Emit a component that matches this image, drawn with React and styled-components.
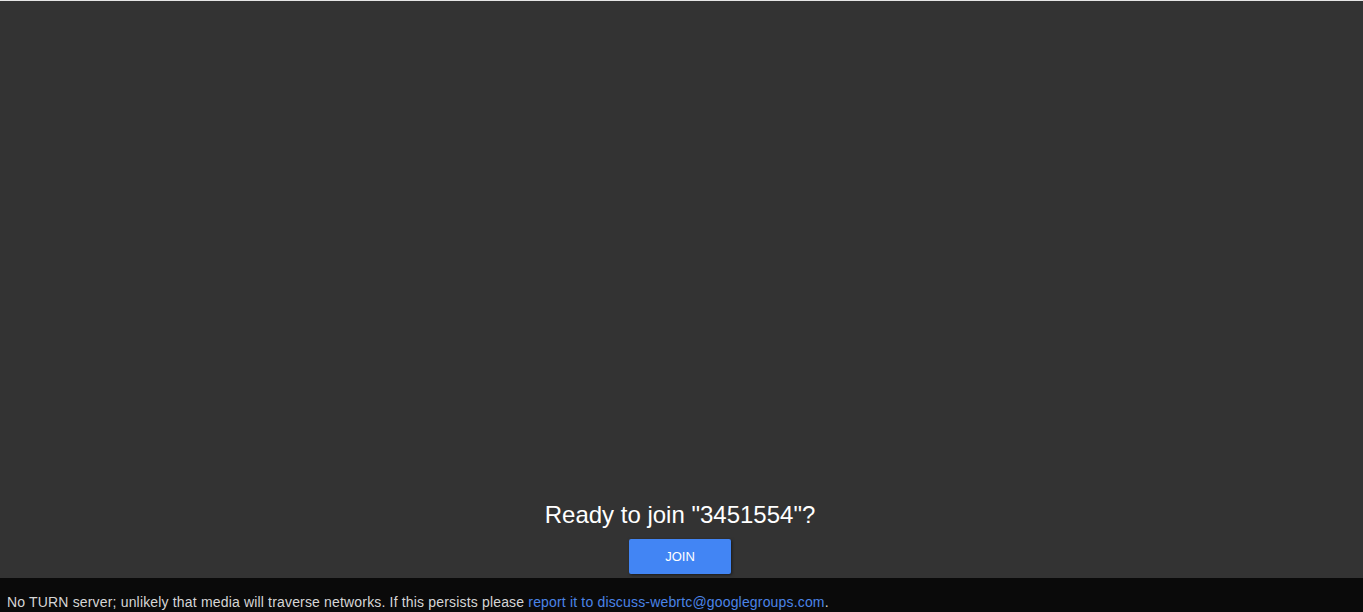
import React from "react";
import styled, { createGlobalStyle } from "styled-components";

const Global = createGlobalStyle`
  html, body { margin: 0; padding: 0; height: 100%; }
  body { background: #333333; font-family: "Liberation Sans", Arial, sans-serif; overflow: hidden; }
  #root { height: 100%; }
`;

const Page = styled.div`
  height: 612px;
  display: flex;
  flex-direction: column;
  border-top: 1px solid #e6e6e6;
  box-sizing: border-box;
`;

const Stage = styled.main`
  flex: 1;
  background: #333333;
  display: flex;
  flex-direction: column;
  align-items: center;
  justify-content: flex-end;
  padding: 0 3px 4px 0;
`;

const Prompt = styled.h1`
  margin: 0;
  font-size: 24px;
  line-height: 28px;
  font-weight: 400;
  color: #ffffff;
`;

const JoinButton = styled.button`
  margin-top: 10px;
  width: 102px;
  height: 35px;
  border: none;
  border-radius: 2px;
  background: #4285f4;
  color: #ffffff;
  font-family: "Liberation Sans", Arial, sans-serif;
  font-size: 13px;
  text-transform: uppercase;
  box-shadow: 1px 1px 3px rgba(0, 0, 0, 0.5);
  cursor: pointer;
`;

const Footer = styled.footer`
  height: 34px;
  box-sizing: border-box;
  background: #0a0a0a;
  padding: 16px 7px 0;
  font-size: 14px;
  line-height: 16px;
  letter-spacing: 0.17px;
  color: #d6d6d6;
  white-space: nowrap;
`;

const Link = styled.a`
  color: #4a84e8;
  text-decoration: none;
`;

export default function App() {
  return (
    <>
      <Global />
      <Page>
        <Stage>
          <Prompt>Ready to join "3451554"?</Prompt>
          <JoinButton>Join</JoinButton>
        </Stage>
        <Footer>
          No TURN server; unlikely that media will traverse networks. If this persists please{" "}
          <Link href="#">report it to discuss-webrtc@googlegroups.com</Link>.
        </Footer>
      </Page>
    </>
  );
}
